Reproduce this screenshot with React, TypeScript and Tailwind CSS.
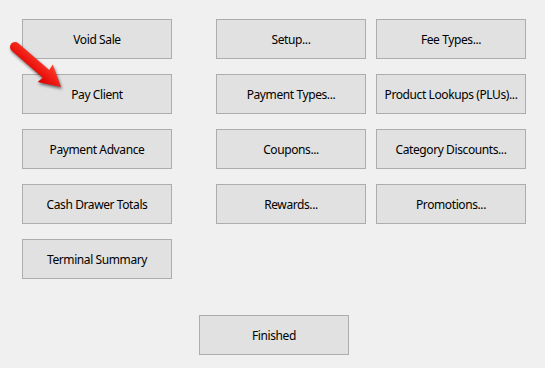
const left = ["Void Sale", "Pay Client", "Payment Advance", "Cash Drawer Totals", "Terminal Summary"];
const right = [
  "Setup...",
  "Fee Types...",
  "Payment Types...",
  "Product Lookups (PLUs)...",
  "Coupons...",
  "Category Discounts...",
  "Rewards...",
  "Promotions...",
];

function Btn({ label }: { label: string }) {
  return (
    <button
      type="button"
      className="flex h-[40px] w-[150px] items-center justify-center border border-[#adadad] bg-[#e1e1e1] pt-[2px] text-[12px] tracking-[-0.4px] text-black"
    >
      {label}
    </button>
  );
}

function Arrow() {
  return (
    <svg
      className="pointer-events-none absolute left-0 top-0"
      width="80"
      height="100"
      viewBox="0 0 80 100"
      style={{ filter: "drop-shadow(1px 2px 1.5px rgba(0,0,0,0.55))" }}
    >
      <defs>
        <linearGradient id="ar" gradientUnits="userSpaceOnUse" x1="0" y1="-10" x2="0" y2="10">
          <stop offset="0" stopColor="#ff3a2a" />
          <stop offset="1" stopColor="#dd0000" />
        </linearGradient>
      </defs>
      <g transform="translate(15 47) rotate(41)">
        <path
          d="M0 -5 L41 -5 L40 -11.5 L61 0 L40 11.5 L41 5 L0 5 A5 5 0 0 1 0 -5 Z"
          fill="url(#ar)"
        />
      </g>
    </svg>
  );
}

export default function App() {
  return (
    <div
      className="relative h-[368px] w-[545px] overflow-hidden bg-[#f0f0f0] pl-[22px] pt-[19px]"
      style={{ fontFamily: '"Noto Sans", "Open Sans", sans-serif' }}
    >
      <div className="flex">
        <div className="flex flex-col gap-[15px]">
          {left.map((l) => (
            <Btn key={l} label={l} />
          ))}
        </div>
        <div className="ml-[44px] grid grid-cols-[150px_150px] content-start gap-x-[10px] gap-y-[15px]">
          {right.map((l) => (
            <Btn key={l} label={l} />
          ))}
        </div>
      </div>
      <div className="ml-[177px] mt-[36px]">
        <Btn label="Finished" />
      </div>
      <Arrow />
    </div>
  );
}
